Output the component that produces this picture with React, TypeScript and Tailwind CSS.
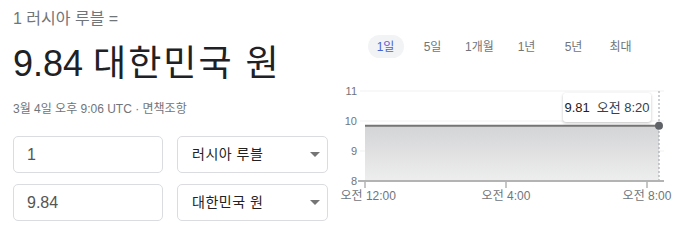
const FONT = '"Liberation Sans", Arial, "Noto Sans CJK KR", sans-serif';

const RANGES = ["1일", "5일", "1개월", "1년", "5년", "최대"];

function Caret() {
  return (
    <svg width="10" height="5" viewBox="0 0 10 5" className="shrink-0" aria-hidden="true">
      <path d="M0 0h10L5 5z" fill="#757575" />
    </svg>
  );
}

function AmountRow({ amount, currency }: { amount: string; currency: string }) {
  return (
    <div className="flex gap-[14px]">
      <div className="flex h-[37px] w-[150px] items-center rounded-[5px] border border-[#dadce0] px-[13px] text-[16px] text-[#555]">
        {amount}
      </div>
      <div className="flex h-[37px] w-[151px] items-center justify-between rounded-[5px] border border-[#dadce0] pl-[14px] pr-[7px] text-[14px] text-[#222]">
        <span className="tracking-[0.5px]">{currency}</span>
        <Caret />
      </div>
    </div>
  );
}

function Chart() {
  // plot: x 25..319, value 8 -> y 101, 11 -> y 11 (30px per unit)
  const y = (v: number) => 101 - (v - 8) * 30;
  return (
    <svg width="347" height="125" viewBox="0 0 347 125" className="block overflow-visible" style={{ fontFamily: FONT }}>
      <defs>
        <linearGradient id="area" x1="0" y1="0" x2="0" y2="1">
          <stop offset="0" stopColor="#d3d4d6" />
          <stop offset="1" stopColor="#eeeeee" />
        </linearGradient>
      </defs>
      {[11, 10, 9].map((v) => (
        <line key={v} x1="20" x2="324" y1={y(v)} y2={y(v)} stroke="#f1f1f1" strokeWidth="1" />
      ))}
      {[11, 10, 9, 8].map((v) => (
        <text key={v} x="17" y={y(v) + 4} textAnchor="end" fontSize="11" fill="#70757a">
          {v}
        </text>
      ))}
      <rect x="25" y={y(9.84)} width="294" height={101 - y(9.84)} fill="url(#area)" />
      <line x1="25" x2="319" y1={y(9.84)} y2={y(9.84)} stroke="#757575" strokeWidth="2" />
      <line x1="319" x2="319" y1="11" y2="101" stroke="#9aa0a6" strokeWidth="1" strokeDasharray="2 2" />
      <line x1="18" x2="324" y1="101" y2="101" stroke="#b3b3b3" strokeWidth="2" />
      {[25, 166, 307].map((x) => (
        <line key={x} x1={x} x2={x} y1="101" y2="108" stroke="#b3b3b3" strokeWidth="1.5" />
      ))}
      <text x="0.5" y="120" fontSize="12" fill="#70757a">
        오전 12:00
      </text>
      <text x="166" y="120" textAnchor="middle" fontSize="12" fill="#70757a">
        오전 4:00
      </text>
      <text x="307" y="120" textAnchor="middle" fontSize="12" fill="#70757a">
        오전 8:00
      </text>
      <circle cx="319" cy={y(9.84)} r="4" fill="#5f6368" />
    </svg>
  );
}

export default function App() {
  return (
    <div className="flex h-[244px] w-[687px] overflow-hidden bg-white" style={{ fontFamily: FONT }}>
      {/* converter */}
      <div className="w-[340px] shrink-0 pl-[13px] pt-[7px]">
        <div className="text-[16px] leading-6 text-[#70757a]">1 러시아 루블 =</div>
        <div className="mt-[11px] text-[36px] leading-[44px] text-[#202124]">
          9.84 <span className="tracking-[2px]">대한민국 원</span>
        </div>
        <div className="mt-[15px] text-[12px] leading-4 text-[#70757a]">
          3월 4일 오후 9:06 UTC · <span>면책조항</span>
        </div>
        <div className="mt-[19px] flex flex-col gap-[11px]">
          <AmountRow amount="1" currency="러시아 루블" />
          <AmountRow amount="9.84" currency="대한민국 원" />
        </div>
      </div>

      {/* chart */}
      <div className="flex-1 pt-[35px]">
        <div className="ml-[22px] flex">
          {RANGES.map((r, i) => (
            <div key={r} className="flex w-[47px] justify-center">
              <span
                className={
                  i === 0
                    ? "flex h-[23px] w-[36px] items-center justify-center rounded-full bg-[#f1f3f4] text-[12px] text-[#4a63d1]"
                    : "flex h-[23px] items-center text-[12px] text-[#70757a]"
                }
              >
                {r}
              </span>
            </div>
          ))}
        </div>
        <div className="relative mt-[22px]">
          <Chart />
          <div className="absolute left-[223px] top-[13px] flex h-[29px] w-[88px] items-center justify-center gap-[7px] rounded-[3px] bg-white text-[13px] text-[#202124] shadow-[0_1px_3px_rgba(0,0,0,0.25)]">
            <span>9.81</span>
            <span className="text-[#3c4043]">오전 8:20</span>
          </div>
        </div>
      </div>
    </div>
  );
}
